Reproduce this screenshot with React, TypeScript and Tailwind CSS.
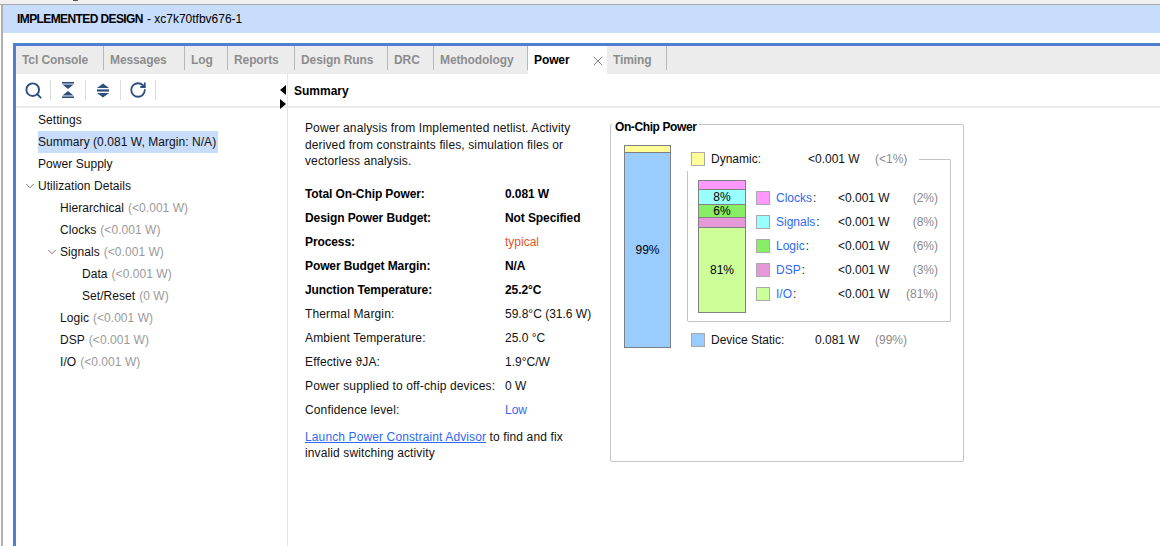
import { RotateCw, Search, X, ChevronDown } from "lucide-react";

const tabs = [
  { label: "Tcl Console", w: "w-[88px]" },
  { label: "Messages", w: "w-[81px]" },
  { label: "Log", w: "w-[43px]" },
  { label: "Reports", w: "w-[67px]" },
  { label: "Design Runs", w: "w-[93px]" },
  { label: "DRC", w: "w-[46px]" },
  { label: "Methodology", w: "w-[94px]" },
];

const tree = [
  { label: "Settings", indent: "pl-[22px]" },
  { label: "Summary (0.081 W, Margin: N/A)", indent: "pl-[22px]", selected: true },
  { label: "Power Supply", indent: "pl-[22px]" },
  { label: "Utilization Details", indent: "pl-[22px]", open: "ml-[7px]" },
  { label: "Hierarchical", note: "(<0.001 W)", indent: "pl-[44px]" },
  { label: "Clocks", note: "(<0.001 W)", indent: "pl-[44px]" },
  { label: "Signals", note: "(<0.001 W)", indent: "pl-[44px]", open: "ml-[29px]" },
  { label: "Data", note: "(<0.001 W)", indent: "pl-[66px]" },
  { label: "Set/Reset", note: "(0 W)", indent: "pl-[66px]" },
  { label: "Logic", note: "(<0.001 W)", indent: "pl-[44px]" },
  { label: "DSP", note: "(<0.001 W)", indent: "pl-[44px]" },
  { label: "I/O", note: "(<0.001 W)", indent: "pl-[44px]" },
];

const stats = [
  { label: "Total On-Chip Power:", value: "0.081 W", bold: true },
  { label: "Design Power Budget:", value: "Not Specified", bold: true },
  { label: "Process:", value: "typical", bold: true, tone: "text-[#e0562b]", plain: true },
  { label: "Power Budget Margin:", value: "N/A", bold: true },
  { label: "Junction Temperature:", value: "25.2°C", bold: true },
  { label: "Thermal Margin:", value: "59.8°C (31.6 W)" },
  { label: "Ambient Temperature:", value: "25.0 °C" },
  { label: "Effective ϑJA:", value: "1.9°C/W" },
  { label: "Power supplied to off-chip devices:", value: "0 W" },
  { label: "Confidence level:", value: "Low", tone: "text-[#2f68f5]" },
];

const parts = [
  { label: "Clocks", pct: "(2%)", swatch: "bg-[#ff99ff]" },
  { label: "Signals", pct: "(8%)", swatch: "bg-[#99ffff]" },
  { label: "Logic", pct: "(6%)", swatch: "bg-[#88ee66]" },
  { label: "DSP", pct: "(3%)", swatch: "bg-[#e699d9]" },
  { label: "I/O", pct: "(81%)", swatch: "bg-[#ccff99]" },
];

function CollapseIcon() {
  return (
    <svg width="14" height="16" viewBox="0 0 14 16" fill="#2c4f7f">
      <rect x="1" y="0" width="12" height="1.6" />
      <polygon points="1.5,2.6 12.5,2.6 7,7" />
      <polygon points="1.5,13.4 12.5,13.4 7,9" />
      <rect x="1" y="14.4" width="12" height="1.6" />
    </svg>
  );
}

function ExpandIcon() {
  return (
    <svg width="14" height="15" viewBox="0 0 14 15" fill="#2c4f7f">
      <polygon points="7,0.5 13,5 1,5" />
      <rect x="1" y="6.4" width="12" height="2.2" />
      <polygon points="7,14.5 13,10 1,10" />
    </svg>
  );
}

function Swatch({ color }: { color: string }) {
  return <div className={`h-[14px] w-[14px] border border-[#aaaaaa] ${color}`} />;
}

function PowerChart() {
  return (
    <div className="relative mt-[16px] h-[338px] w-[354px] rounded-[2px] border border-[#c4c4c4] pl-[13px] pt-[20px]">
      <div className="absolute left-[1px] top-[-5px] bg-white px-[3px] font-bold leading-[14px] tracking-[-0.4px] text-black">
        On-Chip Power
      </div>
      <div className="flex">
        <div className="flex h-[203px] w-[47px] flex-col border border-[#808080]">
          <div className="h-[7px] border-b border-[#808080] bg-[#ffff99]" />
          <div className="flex flex-1 items-center justify-center bg-[#99ccff] text-black">99%</div>
        </div>
        <div className="ml-[20px] w-[260px]">
          <div className="mt-[7px] flex h-[14px] items-center">
            <Swatch color="bg-[#ffff99]" />
            <span className="ml-[6px] w-[97px]">Dynamic:</span>
            <span className="w-[67px]">&lt;0.001 W</span>
            <span className="text-[#8a8a8a]">(&lt;1%)</span>
            <div className="ml-auto mt-[7px] h-[12px] w-[32px] self-start rounded-tr-[2px] border-r border-t border-[#c4c4c4]" />
          </div>
          <div className="ml-[-4px] mt-[5px] flex h-[151px] w-[264px] rounded-b-[2px] border-x border-b border-[#c4c4c4] pl-[10px] pt-[9px]">
            <div className="flex h-[133px] w-[48px] flex-col border border-[#808080] text-black">
              <div className="h-[9px] border-b border-[#808080] bg-[#ff99ff]" />
              <div className="flex h-[15px] items-center justify-center border-b border-[#808080] bg-[#99ffff]">8%</div>
              <div className="flex h-[13px] items-center justify-center border-b border-[#808080] bg-[#88ee66]">6%</div>
              <div className="h-[10px] border-b border-[#808080] bg-[#e699d9]" />
              <div className="flex flex-1 items-center justify-center bg-[#ccff99]">81%</div>
            </div>
            <div className="ml-[10px] mt-[11px] flex flex-col gap-[10px]">
              {parts.map((part) => (
                <div key={part.label} className="flex h-[14px] w-[182px] items-center">
                  <Swatch color={part.swatch} />
                  <span className="ml-[6px] w-[62px]">
                    <span className="text-[#2f68f5]">{part.label}</span>
                    <span className="ml-px">:</span>
                  </span>
                  <span>&lt;0.001 W</span>
                  <span className="ml-auto text-[#8a8a8a]">{part.pct}</span>
                </div>
              ))}
            </div>
          </div>
          <div className="mt-[11px] flex h-[14px] items-center">
            <Swatch color="bg-[#99ccff]" />
            <span className="ml-[6px] w-[104px]">Device Static:</span>
            <span className="w-[60px]">0.081 W</span>
            <span className="text-[#8a8a8a]">(99%)</span>
          </div>
        </div>
      </div>
    </div>
  );
}

export default function App() {
  return (
    <div className="flex h-[546px] w-[1160px] flex-col overflow-hidden bg-white font-['Liberation_Sans',Arial,sans-serif] text-[12px] text-[#111111]">
      <div className="h-[5px] border-b border-[#a8a8a8] bg-[#f0f0f0] pl-[73px]">
        <div className="h-px w-[5px] bg-[#555555]" />
      </div>
      <div className="flex min-h-0 flex-1">
        <div className="ml-px w-[2px] bg-[#b0b0b0]" />
        <div className="flex min-w-0 flex-1 flex-col">
          <div className="flex h-[28px] items-center bg-[#c8dcfb] pl-[14px] text-black">
            <span className="font-bold tracking-[-0.6px]">IMPLEMENTED DESIGN</span>
            <span className="ml-[4px]">- xc7k70tfbv676-1</span>
          </div>
          <div className="ml-[10px] mt-[10px] flex min-h-0 flex-1 flex-col border-l-[3px] border-t-[3px] border-[#4f7fd0]">
            <div className="flex h-[28px] bg-[#ececec] font-bold tracking-[-0.1px] text-[#8c8c8c]">
              <div className="flex">
                {tabs.map((tab) => (
                  <div
                    key={tab.label}
                    className={`flex h-[24px] items-center border-r border-[#b8b8b8] pl-[6px] pt-[3px] ${tab.w}`}
                  >
                    {tab.label}
                  </div>
                ))}
              </div>
              <div className="flex w-[79px] items-center justify-between bg-white pl-[6px] pr-[1px] text-black">
                <span className="mb-[1px]">Power</span>
                <X size={16} strokeWidth={1.5} className="mt-[2px] text-[#888888]" />
              </div>
              <div className="flex h-[24px] w-[60px] items-center border-r border-[#b8b8b8] pl-[6px] pt-[3px]">
                Timing
              </div>
            </div>
            <div className="flex min-h-0 flex-1">
              <div className="w-[272px] border-r border-[#e4e4e4]">
                <div className="flex h-[34px] items-center border-b-2 border-[#ececec]">
                  <div className="flex h-[20px] w-[35px] items-center border-r border-[#dcdcdc] pl-[8px]">
                    <Search size={19} strokeWidth={2.4} className="text-[#2c4f7f]" />
                  </div>
                  <div className="flex h-[20px] w-[35px] items-center justify-center border-r border-[#dcdcdc]">
                    <CollapseIcon />
                  </div>
                  <div className="flex h-[20px] w-[35px] items-center justify-center border-r border-[#dcdcdc]">
                    <ExpandIcon />
                  </div>
                  <div className="flex h-[20px] w-[35px] items-center justify-center border-r border-[#dcdcdc]">
                    <RotateCw size={18} strokeWidth={2.4} className="text-[#2c4f7f]" />
                  </div>
                </div>
                <div className="pt-px">
                  {tree.map((row) => (
                    <div key={row.label} className={`relative flex h-[22px] items-center tracking-[0.05px] ${row.indent}`}>
                      {row.open && (
                        <ChevronDown size={14} strokeWidth={1.6} className={`absolute left-0 text-[#6e6e6e] ${row.open}`} />
                      )}
                      <span className={row.selected ? "flex h-[22px] items-center bg-[#c8dcfb] pr-[2px]" : ""}>{row.label}</span>
                      {row.note && <span className="ml-[4px] text-[#9a9a9a]">{row.note}</span>}
                    </div>
                  ))}
                </div>
              </div>
              <div className="relative min-w-0 flex-1">
                <div className="absolute left-[-8px] top-[11px] h-0 w-0 border-y-[5px] border-r-[6px] border-y-transparent border-r-black" />
                <div className="absolute left-[-8px] top-[25px] h-0 w-0 border-y-[5px] border-l-[6px] border-y-transparent border-l-black" />
                <div className="flex h-[34px] items-center border-b-2 border-[#ececec] pl-[6px] pt-px font-bold text-black">
                  Summary
                </div>
                <div className="flex pl-[17px]">
                  <div className="w-[305px] pt-[12px]">
                    <p className="leading-[16.5px] tracking-[0.12px]">
                      Power analysis from Implemented netlist. Activity
                      <br />
                      derived from constraints files, simulation files or
                      <br />
                      vectorless analysis.
                    </p>
                    <div className="mt-[12px]">
                      {stats.map((stat) => (
                        <div key={stat.label} className="flex h-[24px] items-center">
                          <span className={`w-[200px] shrink-0 ${stat.bold ? "font-bold tracking-[-0.1px] text-black" : "tracking-[0.14px]"}`}>
                            {stat.label}
                          </span>
                          <span className={`${stat.tone ?? ""} ${stat.bold && !stat.plain ? "font-bold tracking-[-0.1px] text-black" : ""}`}>
                            {stat.value}
                          </span>
                        </div>
                      ))}
                    </div>
                    <p className="mt-[7px] leading-[16px] tracking-[0.12px]">
                      <span className="text-[#2f68f5] underline">Launch Power Constraint Advisor</span> to find and fix
                      <br />
                      invalid switching activity
                    </p>
                  </div>
                  <PowerChart />
                </div>
              </div>
            </div>
          </div>
        </div>
      </div>
    </div>
  );
}
